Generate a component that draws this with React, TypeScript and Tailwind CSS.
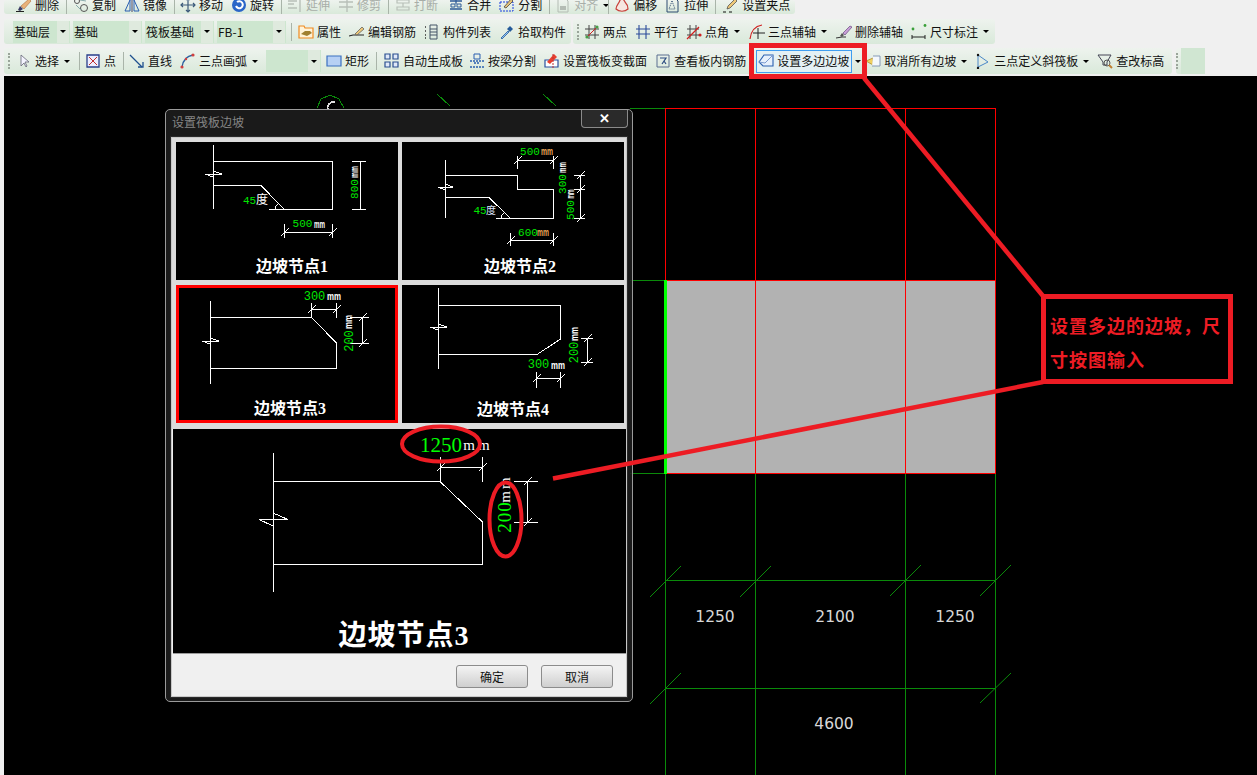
import React from "react"

const s = { fill: "none", strokeWidth: 1 } as const

const icons: Record<string, React.ReactNode> = {
  erase: (<><path d="M0 14.5h8" stroke="#222" {...s} /><path d="M2 13l2-4 3 3-3 2z" fill="#3c3c66" /><path d="M5 9l8-7 2 2-7 8z" fill="#e9b27a" stroke="#b0703a" strokeWidth={0.6} /></>),
  copy: (<><circle cx="4" cy="4" r="2.5" stroke="#555" {...s} /><circle cx="11" cy="11" r="3.5" stroke="#555" {...s} /><path d="M7 3l6 1M3 8l5 5" stroke="#8aa" {...s} /></>),
  mirror: (<><path d="M8 1v14" stroke="#446" {...s} /><path d="M6 3v11H1zM10 3v11h5z" stroke="#2a5fb0" {...s} /></>),
  move: (<path d="M8 1v14M1 8h14M6 3l2-2 2 2M6 13l2 2 2-2M3 6L1 8l2 2M13 6l2 2-2 2" stroke="#3c5a7a" strokeWidth={1.2} fill="none" />),
  rotate: (<><circle cx="8" cy="8" r="7" fill="#2a66c8" /><path d="M5 9a3.5 3.5 0 1 0 1-4" stroke="#fff" strokeWidth={2} fill="none" /></>),
  extend: (<path d="M1 4h9M1 11h9M13 1v14M1 7h6" stroke="#b8c0b8" strokeWidth={1.4} fill="none" />),
  trim: (<path d="M1 5h14M1 10h14M9 1v14" stroke="#b8c0b8" strokeWidth={1.4} fill="none" />),
  cut: (<path d="M2 3h12v3H2zM2 10h12v3H2zM8 6v4" stroke="#b8c0b8" strokeWidth={1.2} fill="none" />),
  merge: (<><path d="M2 4h12M2 12h12M8 1v6" stroke="#2c5a96" strokeWidth={1.3} fill="none" /><path d="M3 7h4v3H3zM9 7h4v3H9z" stroke="#2c5a96" {...s} /></>),
  split: (<><path d="M1 5h13v9H1z" stroke="#1a3ee0" strokeDasharray="2 1" {...s} /><path d="M5 10l7-8 2 2-7 7z" fill="#e4c27a" stroke="#333" strokeWidth={0.7} /></>),
  align: (<><path d="M3 1h7l3 3v11H3z" stroke="#b4bcb4" {...s} /><path d="M5 9h6v4H5z" fill="#b4bcb4" /></>),
  offset: (<path d="M2 12c0-4 3-5 4-9 3-2 4 0 5 2 2 2 3 4 3 7-3 3-9 3-12 0z" fill="#f6e6e0" stroke="#c8403a" strokeWidth={1.2} />),
  stretch: (<><path d="M2 1h8l3 3v11H2z" stroke="#2c4a70" {...s} /><path d="M7 4l3 8H4z" stroke="#2c4a70" strokeDasharray="1 1" {...s} /></>),
  grip: (<><path d="M0 15h3M6 15h3" stroke="#111" {...s} /><path d="M5 9l7-7 2 2-7 7-3 1z" fill="#eec878" stroke="#444" strokeWidth={0.7} /></>),
  attr: (<><path d="M1 2h5l1 2h8v10H1z" fill="#fff3d8" stroke="#f08a20" strokeWidth={1.2} /><path d="M3 10l4-3 5 0 2 2-5 3z" fill="#a08030" /></>),
  rebar: (<><path d="M0 12l4-1 11 0" stroke="#222" strokeWidth={1.2} fill="none" /><path d="M6 10l7-7 2 2-7 6z" fill="#eec878" stroke="#555" strokeWidth={0.7} /></>),
  list: (<><path d="M1 3h2M1 7h2M1 11h2M1 14h2" stroke="#333" strokeDasharray="1 1" strokeWidth={1.5} fill="none" /><path d="M6 1h7v14H6zM6 5h7M6 8h7M6 11h7" stroke="#456" {...s} /></>),
  pick: (<><path d="M2 14l7-7 1 1-7 7z" fill="#8ec0f0" stroke="#245a9a" strokeWidth={0.8} /><path d="M8 5l3-3 3 3-3 3z" fill="#245a9a" /></>),
  twoPt: (<><path d="M5 1v14M11 1v14M1 5h14M1 11h14" stroke="#444" {...s} /><path d="M2 14L14 2" stroke="#d02020" {...s} /><circle cx="3" cy="13" r="1.6" fill="#48a048" /><circle cx="13" cy="3" r="1.6" fill="#48a048" /></>),
  parallel: (<path d="M4 1v14M11 1v14M1 5h14M1 10h14" stroke="#2a4a9a" strokeWidth={1.1} fill="none" />),
  angle: (<><path d="M4 1v14M10 1v14M1 5h12M1 11h12" stroke="#444" {...s} /><path d="M1 15L13 3" stroke="#d02020" strokeWidth={1.2} fill="none" /><circle cx="14" cy="11" r="1.6" fill="#d02020" /></>),
  arcAxis: (<><path d="M1 15C2 6 7 2 13 1" stroke="#d02020" strokeWidth={1.2} fill="none" /><path d="M9 4v11M4 9h12" stroke="#222" {...s} /></>),
  delAxis: (<><path d="M0 14l6-1h4" stroke="#333" {...s} /><path d="M4 12l2-3 2 2-2 2z" fill="#555" /><path d="M7 9l7-7 2 1-7 8z" fill="#c8a0d8" stroke="#6a4a80" strokeWidth={0.7} /></>),
  dim: (<><circle cx="2" cy="5" r="1.4" fill="#3aa03a" /><circle cx="14" cy="1.5" r="1.4" fill="#3aa03a" /><path d="M1 11v4M14 11v4M1 13h13" stroke="#222" {...s} /></>),
  select: (<path d="M5 2v11l3-3 2 4 1-1-2-4h4z" fill="#f4f4ff" stroke="#667" strokeWidth={0.8} />),
  point: (<><path d="M2 2h12v12H2z" fill="#eef" stroke="#2a3f8a" strokeWidth={1.3} /><path d="M4 4l8 8M12 4l-8 8" stroke="#c03030" {...s} /></>),
  line: (<><path d="M1 2l12 12" stroke="#1e4f8e" strokeWidth={1.3} fill="none" /><path d="M9 14h5V9" stroke="#1e4f8e" strokeWidth={1.3} fill="none" /></>),
  arc: (<><path d="M2 14C3 7 7 3 13 2" stroke="#2a60a0" strokeWidth={1.3} fill="none" /><circle cx="2" cy="14" r="1.6" fill="#d04040" /><circle cx="13" cy="2" r="1.6" fill="#d04040" /><circle cx="6" cy="6" r="1.2" fill="#d04040" /></>),
  rect: (<path d="M1 3h14v10H1z" fill="#b6d0f4" stroke="#3a70c0" strokeWidth={1.2} />),
  auto: (<path d="M1 1h5v5H1zM9 1h5v5H9zM1 9h5v5H1zM9 9h5v5H9z" fill="#dfe8f8" stroke="#2a4f90" strokeWidth={1.2} />),
  beam: (<><path d="M5 1h6v5H5z" fill="#d8e8fc" stroke="#2a5fb0" {...s} /><path d="M1 8h14M1 14h14M5 10h6" stroke="#2a5fb0" strokeDasharray="2 1" strokeWidth={1.3} fill="none" /></>),
  section: (<><path d="M1 7h13v7H1z" fill="#fff" stroke="#2a50a0" strokeWidth={1.2} /><path d="M3 9l7-8 3 3-7 7z" fill="#e84030" /><path d="M9 1v14" stroke="#c03030" strokeDasharray="2 1" {...s} /></>),
  view: (<><path d="M2 2h12v12H2z" fill="#dfe6f2" stroke="#5a6f90" {...s} /><path d="M5 5h6L7 11M9 8l2 3" stroke="#2a4a80" strokeWidth={1.2} fill="none" /></>),
  poly: (<><path d="M1 9l5-7h9v11H5z" fill="#e6f0fc" stroke="#2a60b0" strokeWidth={1.1} /><path d="M1 9l6 1 8-8" stroke="#7a9ad0" {...s} /></>),
  cancel: (<><path d="M1 8l7-3v7z" fill="#f0d060" stroke="#a08020" strokeWidth={0.7} /><path d="M8 3h7v10H7" stroke="#7a90b0" fill="#f4f8fc" strokeWidth={0.9} /></>),
  tri: (<><path d="M3 2l10 7-10 5z" fill="#a8cdf2" stroke="#4a88c8" {...s} /><circle cx="3" cy="2" r="1.2" fill="#111" /><circle cx="3" cy="15" r="1.2" fill="#111" /></>),
  level: (<><path d="M1 2h13l-4 7v3H6V9z" fill="#eef2f8" stroke="#445" {...s} /><circle cx="10" cy="10" r="3" fill="#d8e4f0" stroke="#555" {...s} /><path d="M12 12l3 3" stroke="#c08030" strokeWidth={2} /></>),
}

const Icon = ({ name }: { name: string }) => (
  <svg viewBox="0 0 16 16" className="w-4 h-4 shrink-0">
    {icons[name]}
  </svg>
)

const Arrow = () => (
  <span className="ml-[2px] w-0 h-0 border-x-[3px] border-x-transparent border-t-[3px] border-t-black" />
)

const Tool = ({ icon, label, arrow, gray, className = "" }: { icon: string; label: string; arrow?: boolean; gray?: boolean; className?: string }) => (
  <div className={`flex items-center gap-[3px] ${gray ? "text-[#a8aea8]" : "text-[#111]"} ${className}`}>
    <Icon name={icon} />
    <span className="whitespace-nowrap">{label}</span>
    {arrow && <Arrow />}
  </div>
)

const Sep = () => <div className="w-px h-[18px] -ml-px -mr-[3px] bg-[#a9b4a9] shrink-0" />

const Grip = ({ className = "" }: { className?: string }) => (
  <div className={`w-[2px] h-[16px] shrink-0 border-l-2 border-dotted border-[#9aa59a] ${className}`} />
)

const Combo = ({ text, w }: { text: string; w: string }) => (
  <div className={`${w} h-[22px] flex items-center justify-between bg-[#cde6cf] shrink-0`}>
    <span className="pl-px text-[#111]">{text}</span>
    <div className="w-[12px] h-full flex items-center justify-center bg-[#dfeade] mr-px">
      <span className="w-0 h-0 border-x-[3px] border-x-transparent border-t-[3px] border-t-black" />
    </div>
  </div>
)

const toolbarBg = "bg-gradient-to-b from-[#eef3ee] to-[#d9e9da] rounded-[3px]"

const TopRow = () => (
  <div className="h-[14px] overflow-hidden flex">
    <div className={`ml-[4px] w-[791px] h-[14px] ${toolbarBg}`}>
      <div className="flex items-center gap-2 h-[18px] -mt-[4px] pl-[12px]">
        <Tool icon="erase" label="删除" />
        <Sep />
        <Tool icon="copy" label="复制" className="ml-[1px]" />
        <Tool icon="mirror" label="镜像" />
        <Sep />
        <Tool icon="move" label="移动" />
        <Tool icon="rotate" label="旋转" />
        <Sep />
        <Tool icon="extend" label="延伸" gray />
        <Tool icon="trim" label="修剪" gray />
        <Sep />
        <Tool icon="cut" label="打断" gray className="ml-[1px]" />
        <Tool icon="merge" label="合并" className="ml-[2px]" />
        <Tool icon="split" label="分割" />
        <Sep />
        <Tool icon="align" label="对齐" gray arrow className="-mr-[8px]" />
        <Sep />
        <Tool icon="offset" label="偏移" />
        <Tool icon="stretch" label="拉伸" />
        <Sep />
        <Tool icon="grip" label="设置夹点" className="ml-[2px]" />
      </div>
    </div>
  </div>
)

const MiddleRow = () => (
  <div className="h-[25px] mt-[5px] flex gap-[2px]">
    <div className={`ml-[4px] w-[567px] flex items-center gap-2 pl-[9px] ${toolbarBg}`}>
      <div className="flex gap-[3px]">
        <Combo text="基础层" w="w-[57px]" />
        <Combo text="基础" w="w-[69px]" />
        <Combo text="筏板基础" w="w-[69px]" />
        <Combo text="FB-1" w="w-[69px]" />
      </div>
      <div className="w-px h-[18px] -ml-[3px] -mr-[2px] bg-[#a9b4a9]" />
      <Tool icon="attr" label="属性" />
      <Tool icon="rebar" label="编辑钢筋" />
      <Tool icon="list" label="构件列表" />
      <Tool icon="pick" label="拾取构件" />
    </div>
    <div className={`w-[422px] flex items-center gap-2 pl-[4px] ${toolbarBg}`}>
      <Grip className="-mr-[3px]" />
      <Tool icon="twoPt" label="两点" />
      <Tool icon="parallel" label="平行" />
      <Tool icon="angle" label="点角" arrow className="mr-[1px]" />
      <Tool icon="arcAxis" label="三点辅轴" arrow className="mr-[1px]" />
      <Tool icon="delAxis" label="删除辅轴" />
      <Tool icon="dim" label="尺寸标注" arrow />
    </div>
  </div>
)

const BottomRow = () => (
  <div className="h-[26px] mt-[4px] flex gap-[4px]">
    <div className={`ml-[4px] w-[1168px] flex items-center gap-2 pl-[4px] ${toolbarBg}`}>
      <Grip className="-mr-[2px]" />
      <Tool icon="select" label="选择" arrow className="mr-[2px]" />
      <Sep />
      <Tool icon="point" label="点" />
      <Sep />
      <Tool icon="line" label="直线" />
      <Tool icon="arc" label="三点画弧" arrow />
      <div className="-mr-[3px]">
        <Combo text="" w="w-[55px]" />
      </div>
      <Tool icon="rect" label="矩形" />
      <Sep />
      <Tool icon="auto" label="自动生成板" className="ml-[2px] -mr-[2px]" />
      <Tool icon="beam" label="按梁分割" />
      <Tool icon="section" label="设置筏板变截面" />
      <Tool icon="view" label="查看板内钢筋" className="mr-[2px]" />
      <div className="flex items-center -mr-[4px]">
        <div className="h-[23px] w-[96px] flex items-center pl-px gap-[3px] border border-[#3f9df0] bg-[#e4f0f4]">
          <Icon name="poly" />
          <span className="whitespace-nowrap text-[#111]">设置多边边坡</span>
        </div>
        <span className="ml-[3px] w-0 h-0 border-x-[3px] border-x-transparent border-t-[3px] border-t-black" />
      </div>
      <Tool icon="cancel" label="取消所有边坡" arrow />
      <Tool icon="tri" label="三点定义斜筏板" arrow />
      <Tool icon="level" label="查改标高" />
    </div>
    <div className={`w-[29px] flex items-center gap-[3px] ${toolbarBg}`}>
      <Grip />
      <div className="w-[24px] h-full bg-[#d0e6d2]" />
    </div>
  </div>
)

const dimNumber = "font-['Liberation_Mono',monospace]"
const titleFont = "font-['Liberation_Serif','Noto_Sans_CJK_SC',serif] font-bold"

const Num = ({ x, y, t, rot, size = 11 }: { x: number; y: number; t: string; rot?: boolean; size?: number }) => (
  <text x={x} y={y} fill="#00e800" fontSize={size} textAnchor="middle" dominantBaseline="middle" className={dimNumber}
    transform={rot ? `rotate(-90 ${x} ${y})` : undefined}>
    {t}
  </text>
)

// squeezed unit label, its length comes from the drawing
const Mm = ({ x, y, len, rot, fill = "#fff" }: { x: number; y: number; len: number; rot?: boolean; fill?: string }) => (
  <text x={x} y={y} fill={fill} fontSize={10} textLength={len} lengthAdjust="spacingAndGlyphs" textAnchor="middle" dominantBaseline="middle"
    className="font-['Liberation_Sans',sans-serif] font-bold"
    transform={rot ? `rotate(-90 ${x} ${y})` : undefined}>
    mm
  </text>
)

const Title = ({ x, y, t }: { x: number; y: number; t: string }) => (
  <text x={x} y={y + 2} fill="#fff" fontSize={16} textAnchor="middle" dominantBaseline="middle" className={titleFont}>
    {t}
  </text>
)

const W = ({ d }: { d: string }) => <path d={d} stroke="#fff" fill="none" strokeWidth={1} />

const tick = (x: number, y: number) => `M${x - 4} ${y + 4}L${x + 4} ${y - 4}`

const Node1 = () => (
  <svg viewBox="176 142 222 138" className="w-full h-full block" shapeRendering="crispEdges">
    <W d="M213.5 145V209M213.5 161.5H332.5V209.5H269M213.5 185.5H261L284 209M205 174H222M205 174L213 177M213 171L222 174" />
    <W d="M352 161.5H366M352 209.5H366M360.5 161V210" />
    <W d={`M284.5 224V238M332.5 224V238M284 232.5H332${tick(284.5, 232.5)}${tick(332.5, 232.5)}`} />
    <W d="M275 209A9 9 0 0 1 279 203" />
    <Num x={249.5} y={201} t="45" />
    <text x={262} y={201} fill="#fff" fontSize={12} textAnchor="middle" dominantBaseline="middle">度</text>
    <Num x={355} y={189} t="800" rot />
    <Mm x={355} y={172} len={12} rot />
    <Num x={302.5} y={224} t="500" />
    <Mm x={319.5} y={225} len={11} />
    <Title x={292} y={266} t="边坡节点1" />
  </svg>
)

const Node2 = () => (
  <svg viewBox="402 142 222 138" className="w-full h-full block" shapeRendering="crispEdges">
    <W d="M445.5 160V218M445.5 175.5H517.5V189.5H553.5V218.5H496M445.5 197.5H489L510 218M438 187H453M438 187L445 190M445 184L453 187" />
    <W d={`M517.5 156V169M553.5 156V169M517 160.5H553${tick(517.5, 160.5)}${tick(553.5, 160.5)}`} />
    <W d={`M574 175.5H585M574 189.5H585M574 218.5H585M580.5 175V218${tick(580.5, 175.5)}${tick(580.5, 189.5)}${tick(580.5, 218.5)}`} />
    <W d={`M510.5 233V246M553.5 233V246M510 240.5H553${tick(510.5, 240.5)}${tick(553.5, 240.5)}`} />
    <W d="M501 218A9 9 0 0 1 505 212" />
    <Num x={480} y={211} t="45" />
    <text x={491} y={211} fill="#dfe8ff" fontSize={10} textAnchor="middle" dominantBaseline="middle">度</text>
    <Num x={530} y={152} t="500" />
    <Mm x={547} y={152} len={12} fill="#e8a458" />
    <Num x={563} y={184} t="300" rot />
    <Mm x={563} y={167.5} len={11} rot />
    <Num x={571} y={210} t="500" rot />
    <Mm x={571} y={194} len={9} rot />
    <Num x={528} y={233} t="600" />
    <Mm x={543} y={233} len={12} fill="#e8a458" />
    <Title x={520} y={266} t="边坡节点2" />
  </svg>
)

const Node3 = () => (
  <svg viewBox="179 288 216 132" className="w-full h-full block" shapeRendering="crispEdges">
    <W d="M210.5 301V384M210.5 317.5H311.5L336.5 343V368.5H210.5M202 341H219M202 341L210 344M210 338L219 341" />
    <W d={`M311.5 303V318M336.5 303V318M311 309.5H337${tick(311.5, 309.5)}${tick(336.5, 309.5)}`} />
    <W d={`M350 317.5H369M350 343.5H369M362.5 317V344${tick(362.5, 317.5)}${tick(362.5, 343.5)}`} />
    <Num x={314.5} y={297} t="300" size={12} />
    <Mm x={334} y={297} len={14} />
    <Num x={349.5} y={341} t="200" rot size={12} />
    <Mm x={349.5} y={322} len={14} rot />
    <Title x={290} y={408} t="边坡节点3" />
  </svg>
)

const Node4 = () => (
  <svg viewBox="402 285 222 138" className="w-full h-full block" shapeRendering="crispEdges">
    <W d="M438.5 288V369M438.5 305.5H560.5V339L537 354.5H438.5M430 327H447M430 327L438 330M438 324L447 327" />
    <W d={`M581 338.5H593M581 362.5H593M587.5 338V363${tick(587.5, 338.5)}${tick(587.5, 362.5)}`} />
    <W d={`M536.5 372V388M560.5 372V388M536 378.5H561${tick(536.5, 378.5)}${tick(560.5, 378.5)}`} />
    <Num x={538.5} y={365} t="300" size={12} />
    <Mm x={558} y={366} len={14} />
    <Num x={575} y={352.5} t="200" rot size={12} />
    <Mm x={575} y={334} len={14} rot />
    <Title x={513} y={409} t="边坡节点4" />
  </svg>
)

const Preview = () => (
  <svg viewBox="173 429 453 224" className="w-full h-full block">
    <g shapeRendering="crispEdges">
      <W d="M273.5 453V592M273.5 481.5H440L482.5 522V564.5H273.5M259 519.5H288M259 519.5L273 526M273 513L288 519.5" />
      <W d={`M440.5 457V482M482.5 457V482M440 467.5H483${tick(440.5, 467.5)}${tick(482.5, 467.5)}`} />
      <W d={`M514 481.5H538M514 522.5H538M527.5 481V523${tick(527.5, 481.5)}${tick(527.5, 522.5)}`} />
    </g>
    <text x={441} y={447} fill="#00ff00" fontSize={21} textAnchor="middle" dominantBaseline="middle" className="font-['Liberation_Serif',serif]">1250</text>
    <text x={478} y={447} fill="#fff" fontSize={15} textAnchor="middle" dominantBaseline="middle" letterSpacing={3} className="font-['Liberation_Serif',serif]">mm</text>
    <text x={507} y={517} fill="#00ff00" fontSize={19} textAnchor="middle" dominantBaseline="middle" letterSpacing={1} transform="rotate(-90 507 517)" className="font-['Liberation_Serif',serif]">200</text>
    <text x={507} y={489} fill="#fff" fontSize={15} textAnchor="middle" dominantBaseline="middle" letterSpacing={2} transform="rotate(-90 507 489)" className="font-['Liberation_Serif',serif]">mm</text>
    <text x={404} y={639} fill="#fff" fontSize={28} textAnchor="middle" dominantBaseline="middle" letterSpacing={1} className={titleFont}>边坡节点3</text>
  </svg>
)

const DlgButton = ({ label }: { label: string }) => (
  <button className="w-[72px] h-[23px] rounded-[3px] border border-[#8c8c8c] bg-gradient-to-b from-[#f4f4f4] to-[#cfcfcf] text-[12px] text-[#111]">
    {label}
  </button>
)

const Dialog = () => (
  <div className="absolute left-[161px] top-[33px] w-[468px] h-[593px] flex flex-col rounded-[5px] border border-[#9a9a9a] bg-[#1e1e1e]/85">
    <div className="h-[27px] shrink-0 flex items-start justify-between">
      <span className="ml-[6px] mt-[6px] text-[12px] text-[#858585]">设置筏板边坡</span>
      <div className="w-[47px] h-[18px] mr-[4px] flex items-center justify-center rounded-b-[4px] border border-t-0 border-[#8a8a8a] bg-[#2a2a2a]">
        <span className="text-white text-[13px] font-bold leading-none font-['Liberation_Sans',sans-serif]">✕</span>
      </div>
    </div>
    <div className="flex-1 mx-[5px] mb-[4px] flex flex-col border border-[#c8c8c8] bg-[#f0f0f0] outline outline-1 outline-[#2a2a2a]">
      <div className="grid grid-cols-[222px_222px] grid-rows-[138px_138px] gap-x-[4px] gap-y-[5px] pl-[4px] pt-[4px] bg-[#dcdcdc]">
        <div className="bg-black"><Node1 /></div>
        <div className="bg-black"><Node2 /></div>
        <div className="bg-black border-[3px] border-[#ff0000]"><Node3 /></div>
        <div className="bg-black"><Node4 /></div>
      </div>
      <div className="h-[6px] bg-[#dcdcdc]" />
      <div className="ml-px w-[453px] h-[225px] shrink-0 bg-black border-b border-[#9a9a9a]"><Preview /></div>
      <div className="flex-1 flex justify-end gap-[13px] pr-[13px] pt-[11px]">
        <DlgButton label="确定" />
        <DlgButton label="取消" />
      </div>
    </div>
  </div>
)

const green = "#0a8a0a"

const Plan = () => (
  <svg viewBox="4 76 1253 699" className="absolute inset-0 w-full h-full" shapeRendering="crispEdges">
    {/* bits of the model behind the dialog */}
    <path d="M317 108L321 99L330 95L339 99L344 108" stroke={green} fill="none" />
    <path d="M335 102A6 6 0 0 0 328 110" stroke="#ddd" fill="none" strokeWidth={1.5} />
    <path d="M437 94L450 106M543 94L556 106" stroke={green} fill="none" />
    <path d="M630 108.5H665.5M630 280.5H665.5M630 473.5H665.5" stroke={green} fill="none" />
    <path d="M665.5 108.5H995.5M665.5 108V280M755.5 108V280M905.5 108V280M995.5 108V280" stroke="#ff0000" fill="none" />
    <rect x={666} y={280} width={330} height={194} fill="#b2b2b2" />
    <path d="M666 280.5H995.5V473.5H666M755.5 280V473M905.5 280V473" stroke="#ff0000" fill="none" />
    <rect x={664} y={280} width={3} height={194} fill="#00ff00" />
    <path d="M665.5 474V775M755.5 474V775M905.5 474V775M995.5 474V775M665 580.5H996M665 688.5H996" stroke={green} fill="none" />
    <g shapeRendering="auto" stroke={green} fill="none">
      <path d="M650 597L681 566M740 597L771 566M890 596L921 565M980 596L1011 565M650 704L681 673M980 703L1011 673" />
    </g>
    {[
      [715, 617, "1250"],
      [835, 617, "2100"],
      [955, 617, "1250"],
      [834, 724, "4600"],
    ].map(([x, y, t]) => (
      <text key={`${x}-${y}`} x={x} y={y} fill="#d8d8d8" fontSize={15.5} textAnchor="middle" dominantBaseline="middle" shapeRendering="auto" className="font-['DejaVu_Sans',sans-serif]">
        {t}
      </text>
    ))}
  </svg>
)

// red marks somebody drew over the screenshot
const Annotations = () => (
  <>
    <svg viewBox="0 0 1257 775" className="absolute inset-0 w-full h-full pointer-events-none">
      <path d="M864 78L1043 296" stroke="#ed1c24" strokeWidth={4.5} fill="none" />
      <path d="M553 478.5L1043 382" stroke="#ed1c24" strokeWidth={4.5} fill="none" />
      <ellipse cx={441} cy={444} rx={39} ry={17.5} stroke="#ed1c24" strokeWidth={4} fill="none" />
      <ellipse cx={505.5} cy={519.5} rx={16} ry={37} stroke="#ed1c24" strokeWidth={4} fill="none" />
    </svg>
    <div className="absolute left-[749px] top-[43px] w-[118px] h-[36px] border-[5px] border-[#ed1c24]" />
    <div className="absolute left-[1041px] top-[294px] w-[192px] h-[90px] border-[5px] border-[#ed1c24] pl-[4px] pt-[9px]">
      <p className="w-[180px] text-[18px] leading-[34px] font-bold text-[#ed1c24] tracking-[1px]">设置多边的边坡，尺寸按图输入</p>
    </div>
  </>
)

export default function App() {
  return (
    <div className="relative w-[1257px] h-[775px] overflow-hidden bg-[#f0f0f0] text-[12px] leading-none font-['Noto_Sans_CJK_SC','Liberation_Sans',sans-serif]">
      <div className="h-[76px]">
        <TopRow />
        <MiddleRow />
        <BottomRow />
      </div>
      <div className="relative ml-[4px] h-[699px] bg-black">
        <Plan />
        <Dialog />
      </div>
      <Annotations />
    </div>
  )
}
